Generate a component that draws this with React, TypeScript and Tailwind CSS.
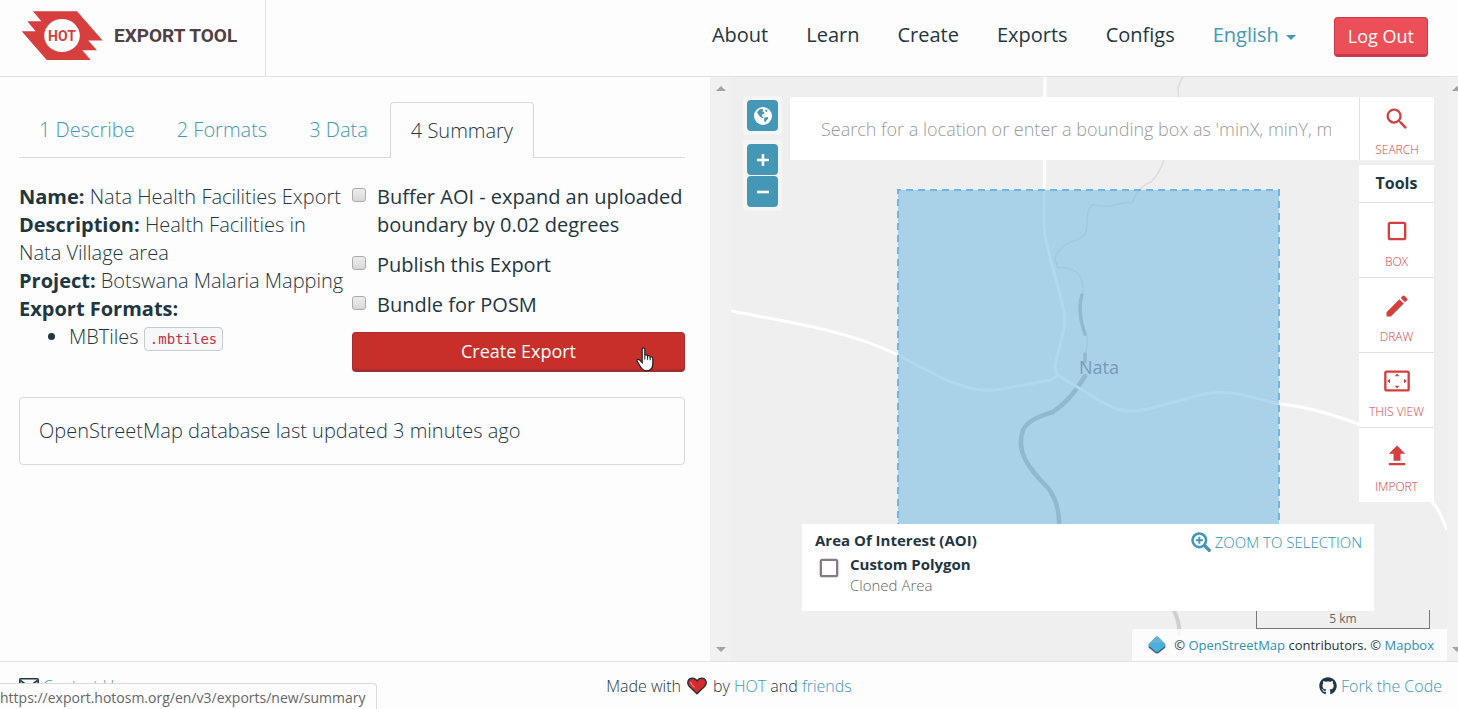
import React from "react";
import {
  MdCropSquare,
  MdEdit,
  MdFileUpload,
  MdSearch,
  MdSettingsOverscan,
} from "react-icons/md";
import { FaGithub } from "react-icons/fa";

const NAV = ["About", "Learn", "Create", "Exports", "Configs"];
const TABS = ["1 Describe", "2 Formats", "3 Data", "4 Summary"];
const OPTIONS = [
  { id: "buffer", label: "Buffer AOI - expand an uploaded boundary by 0.02 degrees" },
  { id: "publish", label: "Publish this Export" },
  { id: "bundle", label: "Bundle for POSM" },
];
const TOOLS = [
  { label: "BOX", Icon: MdCropSquare },
  { label: "DRAW", Icon: MdEdit },
  { label: "THIS VIEW", Icon: MdSettingsOverscan },
  { label: "IMPORT", Icon: MdFileUpload },
];

function Logo() {
  return (
    <svg width="82" height="50" viewBox="21 11 82 50" aria-hidden="true">
      <path
        d="M33 11.3H77L102.7 40.5H88.3L97 50.3H82.3L90.7 60H46.7L21.7 31.3H35.6L27.3 21.3H41.3Z"
        fill="#d73f3f"
      />
      <ellipse cx="62" cy="35.6" rx="17.8" ry="16.5" fill="#fff" />
      <text
        x="62"
        y="41"
        textAnchor="middle"
        fontFamily="Roboto, sans-serif"
        fontWeight="700"
        fontSize="14"
        fill="#d73f3f"
      >
        HOT
      </text>
    </svg>
  );
}

function Globe() {
  return (
    <svg width="20" height="20" viewBox="0 0 20 20" aria-hidden="true">
      <circle cx="10" cy="10" r="9" fill="#fff" />
      <path
        d="M4 6.2L6.4 3.6L9.4 2.8L10.4 4.4L9.2 5.6L11.4 6.2L10.6 8L8.8 8.8L9 10.2L10.6 11L10 12.2L7.4 11L5.6 9Z M12.6 3.2L14.6 4.2L14 6L12.2 5.4Z M11.4 11.4L14.6 11L15.4 12.6L13.4 14.4L12.2 16.6L11 14.6Z"
        fill="#4498b5"
      />
    </svg>
  );
}

function ZoomIn() {
  return (
    <svg width="20" height="20" viewBox="0 0 20 20" aria-hidden="true" fill="none" stroke="#4498b5">
      <circle cx="8.3" cy="8.3" r="6.8" strokeWidth="2.6" />
      <path d="M13.4 13.4L18.2 18.2" strokeWidth="3.4" strokeLinecap="round" />
      <path d="M8.3 4.8V11.8M4.8 8.3H11.8" strokeWidth="2" />
    </svg>
  );
}

function Heart() {
  return (
    <svg width="20" height="18" viewBox="0 0 20 18" aria-label="love">
      <path
        d="M10 16.8L2.2 9.2C-.6 6 1.2 1.2 5.2 1.2C7.4 1.2 9 2.4 10 4C11 2.4 12.6 1.2 14.8 1.2C18.8 1.2 20.6 6 17.8 9.2Z"
        fill="#d52b2b"
        stroke="#26323b"
        strokeWidth="1.4"
      />
      <path d="M3.6 5.4C4 7.6 5.6 9 7.4 10" stroke="#f07070" strokeWidth="1.4" fill="none" strokeLinecap="round" />
    </svg>
  );
}

function Envelope() {
  return (
    <svg width="20" height="16" viewBox="0 0 20 16" aria-hidden="true" fill="none" stroke="#1f3643">
      <rect x=".8" y=".8" width="18.400" height="14.400" rx="1" strokeWidth="1.6" />
      <path d="M1.500 2.500L10 9L18.500 2.500" strokeWidth="1.6" />
    </svg>
  );
}

function Layers() {
  return (
    <svg width="18" height="18" viewBox="0 0 18 18" className="shrink-0" aria-hidden="true">
      <path d="M.6 10L9 3L17.4 10V11.4L10.4 17.2Q9 18 7.6 17.2L.6 11.4Z" fill="#4a6080" />
      <path d="M.4 8.4L7.8 .8Q9 0 10.2 .8L17.6 8.400V9.600L10.2 15.6Q9 16.4 7.8 15.6L.4 9.600Z" fill="#4bafdb" />
      <path d="M.4 8.400L7.8 .8Q9 0 10.200 .8L17.600 8.400L14.500 6.800H3.500Z" fill="#6ab2d4" />
    </svg>
  );
}

function Pointer() {
  return (
    <svg
      className="pointer-events-none absolute top-[15px] right-[31px]"
      width="18"
      height="25"
      viewBox="0 0 18 25"
      aria-hidden="true"
    >
      <path
        d="M6.2 2.2C6.2 .4 8.8 .4 8.8 2.2V8.6C9.2 7.4 11.6 7.6 11.6 9.2C12.2 8.2 14.2 8.6 14.2 10.2C15 9.4 16.8 9.8 16.8 11.6V16.6C16.8 20.8 14.6 23.8 10.8 23.8C7.4 23.8 5.8 22.2 4.4 19.6L1.2 14.4C.4 12.8 2.2 11.6 3.6 13L6.2 15.8Z"
        fill="#fff"
        stroke="#1a1a1a"
        strokeWidth="1.1"
      />
      <path d="M8.8 8.6V12.6M11.6 9.2V12.8M14.2 10.2V13.2" stroke="#1a1a1a" strokeWidth="1" />
    </svg>
  );
}

function ScrollRail({ className }: { className: string }) {
  return (
    <div className={`flex shrink-0 flex-col items-center justify-between overflow-hidden bg-[#f1f1f1] py-2 ${className}`}>
      <svg width="10" height="6" viewBox="0 0 10 6" className="shrink-0" aria-hidden="true">
        <path d="M0 6L5 1L10 6Z" fill="#a3a3a3" />
      </svg>
      <svg width="10" height="6" viewBox="0 0 10 6" className="shrink-0" aria-hidden="true">
        <path d="M0 0H10L5 5Z" fill="#a3a3a3" />
      </svg>
    </div>
  );
}

function MapCanvas() {
  return (
    <svg
      className="absolute inset-0 h-full w-full"
      viewBox="731 77 716 584"
      preserveAspectRatio="xMidYMid slice"
      aria-label="Map of Nata"
    >
      <rect x="731" y="77" width="716" height="584" fill="#efefef" />
      <g fill="none" stroke="#dcdcdc" strokeLinejoin="round">
        <path
          d="M1183 77C1176 88 1178 92 1179 98C1186 118 1170 130 1164 160C1160 172 1156 176 1151 182C1144 184 1136 192 1132 203C1122 200 1112 208 1104 206L1092 205C1084 212 1090 228 1084 236C1076 242 1064 242 1060 250C1052 258 1056 262 1058 268C1068 266 1076 270 1081 278C1084 286 1083 292 1082 296"
          strokeWidth="1.5"
        />
        <path d="M1086 334C1090 344 1085 350 1085 358" strokeWidth="1.5" />
      </g>
      <g fill="none" stroke="#b9b9b9" strokeLinejoin="round" strokeLinecap="round">
        <path d="M1082 295C1078 308 1080 320 1085 334M1085 354V362" strokeWidth="3.500" />
        <path
          d="M1085 376C1078 388 1068 402 1053 412C1040 416 1028 420 1023 430C1016 450 1026 466 1048 488C1056 498 1060 510 1059 530"
          strokeWidth="4.500"
        />
        <path d="M1172 605C1176 616 1180 622 1179 634" stroke="#cfcfcf" strokeWidth="4" />
      </g>
      <g fill="none" stroke="#fff" strokeWidth="3" strokeLinejoin="round">
        <path d="M1045 77L1044 226C1044 244 1055 270 1064 312C1067 328 1059 344 1055 366C1055 374 1059 376 1064 379L1102 402C1124 414 1130 412 1148 409L1204 394C1236 388 1256 400 1280 404C1320 408 1370 426 1400 444" />
        <path d="M731 311C800 324 850 332 896 354L946 380C970 390 986 392 1002 389L1050 380C1054 379 1056 377 1058 374" />
        <path d="M1428 498C1438 506 1442 518 1447 530" />
      </g>
      <text x="1079" y="374" fontFamily="'Open Sans', sans-serif" fontSize="18" fill="#80708c">
        Nata
      </text>
      <rect x="898" y="190" width="381" height="400" fill="#70b9e2" fillOpacity=".55" />
      <path
        d="M898 590V190H1279V590"
        fill="none"
        stroke="#6fb4e2"
        strokeWidth="2"
        strokeDasharray="7 5"
      />
    </svg>
  );
}

function MapButton({ label, children }: { label: string; children: React.ReactNode }) {
  return (
    <button
      type="button"
      aria-label={label}
      className="flex size-[31px] items-center justify-center rounded-sm bg-[#4498b5] text-white"
    >
      {children}
    </button>
  );
}

const toolButton =
  "flex w-full flex-col items-center text-xs font-light leading-4 text-[#d73f3f]";

function MapPanel() {
  return (
    <section className="relative min-w-0 flex-[716_1_0%] overflow-hidden">
      <MapCanvas />

      <div className="absolute top-[19px] left-3 flex flex-col gap-[5px]">
        <div className="rounded bg-white/40 p-1">
          <MapButton label="Zoom to world">
            <Globe />
          </MapButton>
        </div>
        <div className="flex flex-col gap-px rounded bg-white/40 p-1">
          <MapButton label="Zoom in">
            <svg width="12" height="12" viewBox="0 0 12 12" aria-hidden="true">
              <path d="M6 0V12M0 6H12" stroke="#fff" strokeWidth="2.6" />
            </svg>
          </MapButton>
          <MapButton label="Zoom out">
            <svg width="12" height="12" viewBox="0 0 12 12" aria-hidden="true">
              <path d="M0 6H12" stroke="#fff" strokeWidth="2.6" />
            </svg>
          </MapButton>
        </div>
      </div>

      <div className="absolute top-5 right-[13px] left-[59px] flex flex-col items-end gap-[5px]">
        <form className="flex h-[63px] w-full bg-white">
          <input
            type="text"
            aria-label="Location"
            placeholder="Search for a location or enter a bounding box as 'minX, minY, maxX, maxY'"
            className="mr-7 ml-[31px] min-w-0 flex-1 bg-transparent text-lg font-light outline-none placeholder:text-[#999]"
          />
          <div className="w-[75px] border-l border-[#e1e1e1] pt-2">
            <button type="button" className={toolButton}>
              <MdSearch className="mb-[9px] size-7" />
              SEARCH
            </button>
          </div>
        </form>
        <div className="w-[75px] bg-white">
          <h2 className="h-[37px] text-center text-base leading-9 font-bold">Tools</h2>
          {TOOLS.map(({ label, Icon }) => (
            <div key={label} className="h-[75px] border-t border-[#e1e1e1] pt-[14px]">
              <button type="button" className={toolButton}>
                <Icon className="mb-[9px] size-7" />
                {label}
              </button>
            </div>
          ))}
        </div>
      </div>

      <div className="absolute right-[17px] bottom-8 flex h-[19px] w-[174px] items-center justify-center border border-t-0 border-[#777] text-xs text-[#666]">
        5 km
      </div>

      <div className="absolute right-[73px] bottom-[50px] left-[71px] flex h-[87px] justify-between bg-white pt-[6px] pr-3 pl-[13px] text-[15px] leading-[21px]">
        <div>
          <h2 className="font-bold">Area Of Interest (AOI)</h2>
          <div className="mt-[3px] flex gap-[7px]">
            <MdCropSquare className="size-7 text-[#87788c]" />
            <div>
              <p className="font-bold">Custom Polygon</p>
              <p className="font-light text-[#666]">Cloned Area</p>
            </div>
          </div>
        </div>
        <a href="#zoom" className="flex h-6 items-center gap-1 font-light text-[#2f91b5]">
          <ZoomIn />
          ZOOM TO SELECTION
        </a>
      </div>

      <div className="absolute right-0 bottom-0 flex h-8 items-center gap-2 rounded-tl bg-white/80 pr-[13px] pl-4 text-[13px]">
        <Layers />
        <p>
          © <a href="#osm" className="text-[#2f91b5]">OpenStreetMap</a> contributors. ©{" "}
          <a href="#mapbox" className="text-[#2f91b5]">Mapbox</a>
        </p>
      </div>
    </section>
  );
}

function SummaryPanel() {
  return (
    <section className="min-w-0 flex-[710_1_0%] overflow-hidden">
      <div className="pt-[25px] pr-[25px] pl-[19px]">
        <nav className="flex gap-0.5 border-b border-[#d9d9d9] font-light">
          {TABS.map((tab, i) => (
            <a
              key={tab}
              href={`#tab-${i + 1}`}
              className={
                i === 3
                  ? "-mb-px flex h-14 items-center rounded-t border border-b-0 border-[#d9d9d9] bg-[#fdfdfd] px-5"
                  : "flex h-[55px] items-center px-5 text-[#4498b5]"
              }
            >
              {tab}
            </a>
          ))}
        </nav>

        <div className="mt-[25px] grid grid-cols-2">
          <div className="font-light">
            <p><strong className="font-bold">Name:</strong> Nata Health Facilities Export</p>
            <p><strong className="font-bold">Description:</strong> Health Facilities in Nata Village area</p>
            <p><strong className="font-bold">Project:</strong> Botswana Malaria Mapping</p>
            <p><strong className="font-bold">Export Formats:</strong></p>
            <ul className="list-disc pl-[50px]">
              <li>
                MBTiles{" "}
                <code className="rounded border border-[#c5cbd3] bg-[#f5f7f9] px-[5px] py-[3px] font-['DejaVu_Sans_Mono',monospace] text-sm text-[#c7303f]">
                  .mbtiles
                </code>
              </li>
            </ul>
          </div>

          <div className="flex flex-col gap-[13px]">
            <div className="flex flex-col gap-3">
              {OPTIONS.map(({ id, label }) => (
                <div key={id} className="flex gap-[11px]">
                  <input
                    id={id}
                    type="checkbox"
                    className="mt-[5px] size-[14px] shrink-0 appearance-none rounded-[3px] border border-[#aaa] bg-linear-to-b from-[#eee] to-[#d8d8d8]"
                  />
                  <label htmlFor={id}>{label}</label>
                </div>
              ))}
            </div>
            <div className="relative">
              <button
                type="button"
                className="h-10 w-full rounded border border-b-3 border-[#a52c30] bg-[#c72f2b] text-lg leading-9 text-white"
              >
                Create Export
              </button>
              <Pointer />
            </div>
          </div>
        </div>

        <div className="mt-[25px] rounded border border-[#d9d9d9] p-[19px] font-light">
          OpenStreetMap database last updated 3 minutes ago
        </div>
      </div>
    </section>
  );
}

export default function App() {
  return (
    <div className="flex h-screen flex-col overflow-hidden bg-[#fdfdfd] font-['Open_Sans','Noto_Sans',sans-serif] text-xl leading-7 text-[#1f3643]">
      <header className="flex h-[77px] shrink-0 items-stretch justify-between border-b border-[#e1e1e1]">
        <a href="#home" className="flex items-center gap-[11px] border-r border-[#e1e1e1] pr-7 pb-1 pl-[21px]">
          <Logo />
          <span className="font-[Roboto,sans-serif] text-[19px] font-bold text-[#4f4146]">EXPORT TOOL</span>
        </a>
        <nav className="flex items-start gap-[38px] pt-[17px] pr-[30px]">
          {NAV.map((item) => (
            <a key={item} href={`#${item.toLowerCase()}`} className="pt-1">
              {item}
            </a>
          ))}
          <button type="button" className="flex items-center gap-[7px] pt-1 text-[#4498b5]">
            English
            <svg width="10" height="5" viewBox="0 0 10 5" className="mt-1" aria-hidden="true">
              <path d="M0 0H10L5 5Z" fill="#4498b5" />
            </svg>
          </button>
          <button
            type="button"
            className="h-10 rounded border border-b-3 border-[#c93a49] bg-[#ec4f57] px-[13px] text-lg leading-9 text-white"
          >
            Log Out
          </button>
        </nav>
      </header>

      <main className="flex min-h-0 flex-1">
        <SummaryPanel />
        <ScrollRail className="w-[21px]" />
        <MapPanel />
        <ScrollRail className="w-[11px] pl-[5px] [&>svg]:self-start" />
      </main>

      <footer className="grid h-12 shrink-0 grid-cols-3 items-center border-t border-[#e1e1e1] px-4 text-base font-light">
        <a href="#contact" className="flex items-center gap-1 pl-[3px] text-[#4498b5]">
          <Envelope />
          Contact Us
        </a>
        <p className="flex items-center justify-center gap-[6px]">
          Made with <Heart />
          <span>
            by <a href="#hot" className="text-[#4498b5]">HOT</a> and{" "}
            <a href="#friends" className="text-[#4498b5]">friends</a>
          </span>
        </p>
        <a href="#code" className="flex items-center gap-1 justify-self-end text-[#4498b5]">
          <FaGithub className="size-[18px] text-[#1f3643]" />
          Fork the Code
        </a>
      </footer>

      <div className="fixed bottom-0 left-0 h-[26px] rounded-tr border border-b-0 border-l-0 border-[#dadada] bg-[#fdfdfd] pr-[11px] text-sm leading-7 text-[#666]">
        https://export.hotosm.org/en/v3/exports/new/summary
      </div>
    </div>
  );
}
